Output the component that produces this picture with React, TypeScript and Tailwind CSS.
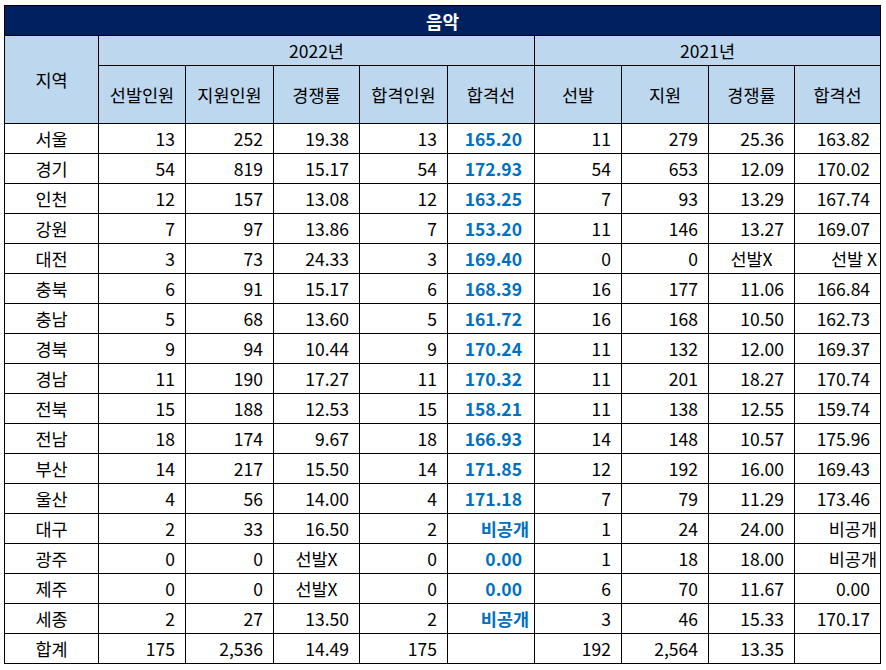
import React from "react";

type Cell = string;
const rows: Cell[][] = [
  ["서울", "13", "252", "19.38", "13", "165.20", "11", "279", "25.36", "163.82"],
  ["경기", "54", "819", "15.17", "54", "172.93", "54", "653", "12.09", "170.02"],
  ["인천", "12", "157", "13.08", "12", "163.25", "7", "93", "13.29", "167.74"],
  ["강원", "7", "97", "13.86", "7", "153.20", "11", "146", "13.27", "169.07"],
  ["대전", "3", "73", "24.33", "3", "169.40", "0", "0", "선발X", "선발 X"],
  ["충북", "6", "91", "15.17", "6", "168.39", "16", "177", "11.06", "166.84"],
  ["충남", "5", "68", "13.60", "5", "161.72", "16", "168", "10.50", "162.73"],
  ["경북", "9", "94", "10.44", "9", "170.24", "11", "132", "12.00", "169.37"],
  ["경남", "11", "190", "17.27", "11", "170.32", "11", "201", "18.27", "170.74"],
  ["전북", "15", "188", "12.53", "15", "158.21", "11", "138", "12.55", "159.74"],
  ["전남", "18", "174", "9.67", "18", "166.93", "14", "148", "10.57", "175.96"],
  ["부산", "14", "217", "15.50", "14", "171.85", "12", "192", "16.00", "169.43"],
  ["울산", "4", "56", "14.00", "4", "171.18", "7", "79", "11.29", "173.46"],
  ["대구", "2", "33", "16.50", "2", "비공개", "1", "24", "24.00", "비공개"],
  ["광주", "0", "0", "선발X", "0", "0.00", "1", "18", "18.00", "비공개"],
  ["제주", "0", "0", "선발X", "0", "0.00", "6", "70", "11.67", "0.00"],
  ["세종", "2", "27", "13.50", "2", "비공개", "3", "46", "15.33", "170.17"],
  ["합계", "175", "2,536", "14.49", "175", "", "192", "2,564", "13.35", ""],
];

const widths = [94, 87, 88, 86, 88, 87, 87, 87, 86, 86];
const isNum = (s: string) => /^[0-9.,]+$/.test(s);

export default function App() {
  return (
    <div
      className="bg-white w-[886px] h-[670px] pt-[5px] pl-[4px]"
      style={{ fontFamily: '"Noto Sans CJK KR", "Noto Sans", sans-serif' }}
    >
      <table className="border-collapse table-fixed w-[876px] text-[17.5px] text-black leading-none">
        <colgroup>
          {widths.map((w, i) => (
            <col key={i} style={{ width: w }} />
          ))}
        </colgroup>
        <thead>
          <tr className="h-[30px]">
            <th colSpan={10} className="border border-black bg-[#002060] text-white font-bold text-[18px] text-center">
              음악
            </th>
          </tr>
          <tr className="h-[30px]">
            <th rowSpan={2} className="border border-black bg-[#BDD7EE] font-normal text-center">
              지역
            </th>
            <th colSpan={5} className="border border-black bg-[#BDD7EE] font-normal text-center">
              2022년
            </th>
            <th colSpan={4} className="border border-black bg-[#BDD7EE] font-normal text-center">
              2021년
            </th>
          </tr>
          <tr className="h-[58px]">
            {["선발인원", "지원인원", "경쟁률", "합격인원", "합격선", "선발", "지원", "경쟁률", "합격선"].map((h, i) => (
              <th key={i} className="border border-black bg-[#BDD7EE] font-normal text-center whitespace-nowrap">
                {h}
              </th>
            ))}
          </tr>
        </thead>
        <tbody>
          {rows.map((r, ri) => (
            <tr key={ri} className="h-[30px]">
              {r.map((c, ci) => {
                if (ci === 0) {
                  return (
                    <td key={ci} className="border border-black text-center">
                      {c}
                    </td>
                  );
                }
                const blue = ci === 5;
                let cls = "border border-black whitespace-nowrap ";
                if (c === "선발X") {
                  cls += "text-center";
                } else if (blue) {
                  cls += "text-right font-bold text-[#0070C0] " + (isNum(c) ? "pr-[12px]" : "pr-[5px]");
                } else if (isNum(c)) {
                  cls += "text-right pr-[10px]";
                } else {
                  cls += "text-right pr-[3px]";
                }
                return (
                  <td key={ci} className={cls}>
                    {c}
                  </td>
                );
              })}
            </tr>
          ))}
        </tbody>
      </table>
    </div>
  );
}
